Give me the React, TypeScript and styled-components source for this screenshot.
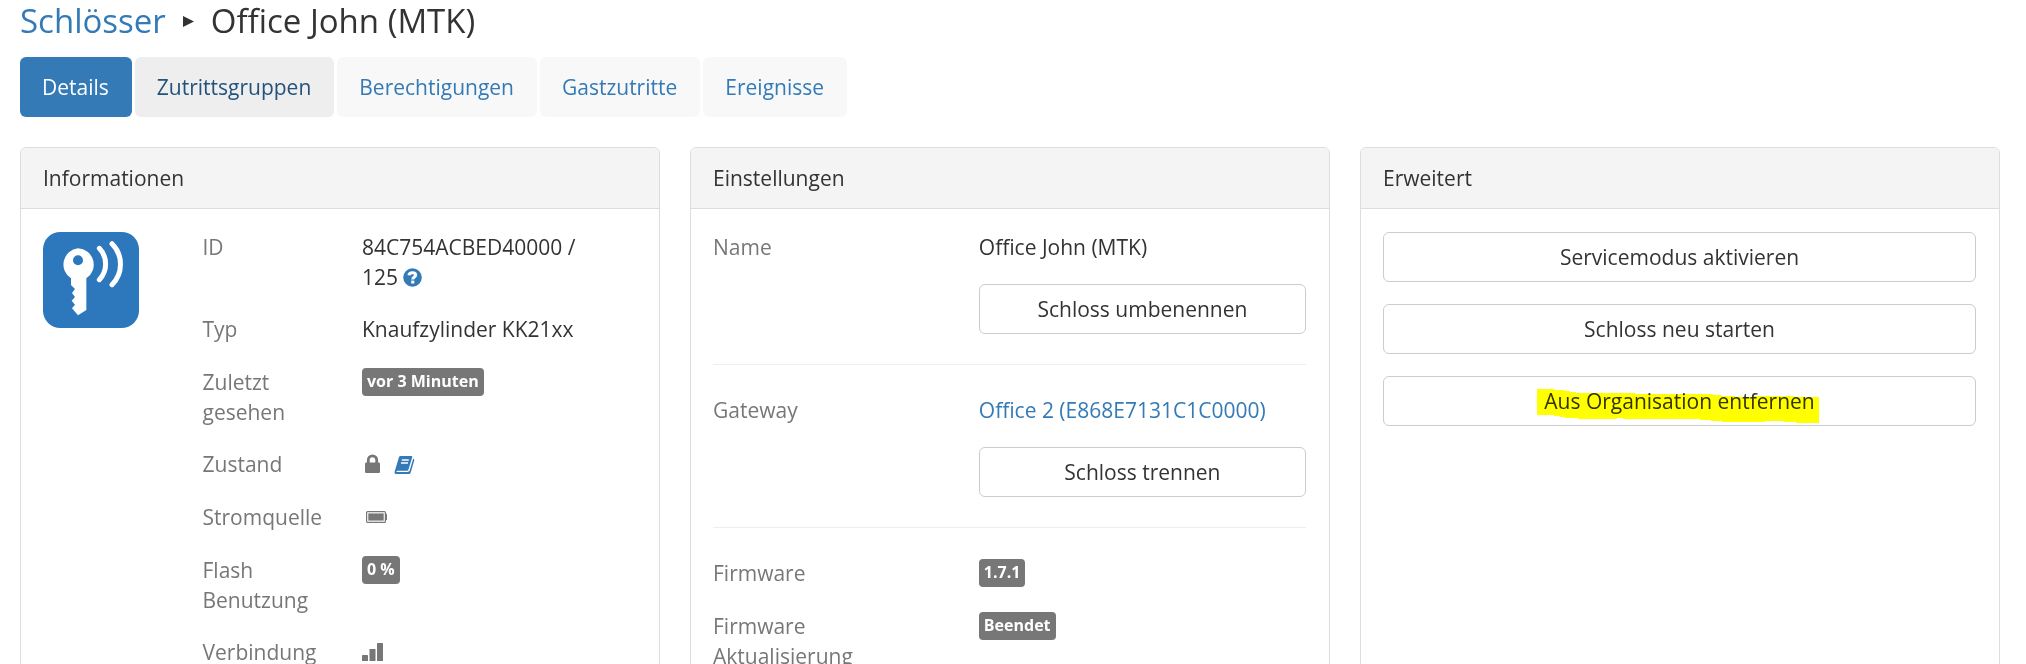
import React from 'react';
import styled, { createGlobalStyle, css } from 'styled-components';

const GlobalStyle = createGlobalStyle`
  *, *::before, *::after { box-sizing: border-box; }
  body {
    margin: 0;
    background: #fff;
    color: #333;
    font-family: 'Open Sans', 'Noto Sans', sans-serif;
    font-size: 21px;
    line-height: 30px;
  }
  a { color: #337ab7; text-decoration: none; }
`;

const Page = styled.main`
  height: 100vh;
  overflow: hidden;
  padding: 0 26px 0 20px;
`;

const Breadcrumb = styled.h1`
  display: flex;
  align-items: center;
  gap: 17px;
  margin: 0 0 15px;
  font-size: 33px;
  font-weight: 400;
  line-height: 42px;
`;

const Tabs = styled.nav`
  display: flex;
  gap: 3px;
  margin-bottom: 30px;
`;

const Tab = styled.a<{ $state?: 'active' | 'hover' }>`
  padding: 15px 23px 15px 22px;
  border-radius: 6px;
  background: #f8f8f8;
  ${({ $state }) => $state === 'active' && css`
    background: #337ab7;
    color: #fff;
  `}
  ${({ $state }) => $state === 'hover' && css`
    background: #eee;
    color: #23527c;
  `}
`;

const Columns = styled.div`
  display: grid;
  grid-template-columns: repeat(3, minmax(0, 1fr));
  gap: 30px;
`;

const Panel = styled.section`
  border: 1px solid #ddd;
  border-radius: 6px;
  overflow: hidden;
`;

const PanelTitle = styled.h2`
  margin: 0;
  padding: 15px 22px;
  border-bottom: 1px solid #ddd;
  background: #f4f4f4;
  font-size: 21px;
  font-weight: 400;
`;

const PanelBody = styled.div`
  padding: 23px 0 22px;
`;

const InfoLayout = styled.div`
  display: grid;
  grid-template-columns: 1fr 3fr;
`;

const IconCell = styled.div`
  padding: 0 22px;
  svg { display: block; }
`;

const Fields = styled.dl`
  display: flex;
  flex-direction: column;
  gap: 22px;
  margin: 0;
`;

const Field = styled.div<{ $columns: string }>`
  display: grid;
  grid-template-columns: ${({ $columns }) => $columns};
  min-height: 31px;
`;

const Label = styled.dt`
  padding: 0 22px;
  color: #777;
`;

const Value = styled.dd`
  min-width: 0;
  margin: 0;
  padding: 0 23px 0 22px;
`;

const IconLine = styled.span`
  display: flex;
  align-items: center;
  gap: 11px;
  height: 30px;
  color: #777;
  a { display: flex; }
`;

const NoWrap = styled.span`
  white-space: nowrap;
`;

const HelpLink = styled.a`
  svg { vertical-align: -2px; }
`;

const Badge = styled.span`
  display: block;
  width: fit-content;
  margin-top: 1px;
  padding: 3px 5px 5px;
  border-radius: 4px;
  background: #777;
  color: #fff;
  font-size: 16px;
  font-weight: 700;
  line-height: 20px;
`;

const Button = styled.button`
  display: block;
  width: 100%;
  padding: 9px 18px;
  border: 1px solid #ccc;
  border-radius: 6px;
  background: #fff;
  color: #333;
  font: inherit;
  text-align: center;
`;

const ValueButton = styled(Button)`
  margin-top: 22px;
`;

const Divider = styled.hr`
  margin: 30px 23px 30px 22px;
  border: 0;
  border-top: 1px solid #eee;
`;

const Actions = styled.div`
  display: flex;
  flex-direction: column;
  gap: 22px;
  padding: 0 23px 0 22px;
`;

const Marked = styled.span`
  position: relative;
`;

const Marker = styled.svg`
  position: absolute;
  left: -7px;
  top: 2px;
  mix-blend-mode: multiply;
`;

const KeyIcon = () => (
  <svg width="96" height="96" viewBox="69 66 288 288" aria-hidden="true">
    <rect x="69" y="66" width="288" height="288" rx="52" fill="#2d78bd" />
    <path
      fill="#fff"
      fillRule="evenodd"
      d="M174 115a49 49 0 0 1 25 90v95l-25 16-18-21 9-11-10-12 10-11-9-12 9-12-12-12v-20a49 49 0 0 1 21-90zM174 136a15 15 0 1 0 0 30a15 15 0 1 0 0-30z"
    />
    <g fill="none" stroke="#fff" strokeWidth="15" strokeLinecap="round">
      <path d="M238 115a68 68 0 0 1 0 94" />
      <path d="M276 101a87 87 0 0 1 0 123" />
    </g>
  </svg>
);

const HelpIcon = () => (
  <svg width="19" height="19" viewBox="0 0 19 19" aria-hidden="true">
    <circle cx="9.5" cy="9.5" r="9.3" fill="#337ab7" />
    <path d="M6 7.400C6.100 5.400 7.400 4.700 9.500 4.700c2 0 3.200.8 3.200 2.300 0 2-3 2.100-3 4.500" fill="none" stroke="#fff" strokeWidth="3" />
    <rect x="8.200" y="12.600" width="3.100" height="2.900" fill="#fff" />
  </svg>
);

const LockIcon = () => (
  <svg width="21" height="21" viewBox="0 0 21 21" aria-hidden="true">
    <path d="M6.300 9.500V6a4.200 4.200 0 0 1 8.400 0V9.500" fill="none" stroke="currentColor" strokeWidth="2.800" />
    <rect x="3" y="8.500" width="15" height="10.500" rx="1.200" fill="currentColor" />
  </svg>
);

const BookIcon = () => (
  <svg width="21" height="21" viewBox="0 0 21 21" aria-hidden="true">
    <path fill="currentColor" d="M6.600 2H17c1 0 1.400.5 1.100 1.400L14.500 15.500c-.3.900-.8 1.200-1.700 1.200H3.400c-1 0-1.200 1.200-.4 1.200h10.800c.9 0 1.500-.4 1.800-1.200L19.200 4.700c1 .2 1.300.9 1 1.800L16.700 18.500c-.4 1.200-1 1.600-2.100 1.600H2.400C.9 20.100.2 19 .7 17.500L4.800 3.700C5.100 2.500 5.600 2 6.600 2z" />
    <path d="M7.800 6h7M7 9h7" stroke="#fff" strokeWidth="1.300" />
  </svg>
);

const BatteryIcon = () => (
  <svg width="21" height="21" viewBox="0 0 21 21" aria-hidden="true">
    <rect x="0.600" y="4.600" width="18.800" height="10.800" rx="1" fill="none" stroke="currentColor" strokeWidth="1.200" />
    <rect x="2.300" y="6.400" width="15.400" height="7.200" fill="currentColor" />
    <path d="M19.500 6.500c1 0 1.500.5 1.500 1.200v4.600c0 .7-.5 1.200-1.500 1.200z" fill="currentColor" />
  </svg>
);

const SignalIcon = () => (
  <svg width="21" height="21" viewBox="0 0 21 21" fill="currentColor" aria-hidden="true">
    <rect x="0" y="13" width="6" height="6" rx="0.500" />
    <rect x="7.500" y="7" width="6" height="12" rx="0.500" />
    <rect x="15" y="1" width="6" height="18" rx="0.500" />
  </svg>
);

const infoColumns = '1fr 2fr';
const settingColumns = '5fr 7fr';

function Row({ label, columns, children }: { label: string; columns: string; children: React.ReactNode }) {
  return (
    <Field $columns={columns}>
      <Label>{label}</Label>
      <Value>{children}</Value>
    </Field>
  );
}

export default function App() {
  return (
    <>
      <GlobalStyle />
      <Page>
        <Breadcrumb>
          <a href="#locks">Schlösser</a>
          <svg width="11" height="11" viewBox="0 0 11 11" aria-hidden="true">
            <path d="M0 0L11 5.500L0 11z" fill="#333" />
          </svg>
          <span>Office John (MTK)</span>
        </Breadcrumb>

        <Tabs>
          <Tab href="#details" $state="active" aria-current="page">Details</Tab>
          <Tab href="#groups" $state="hover">Zutrittsgruppen</Tab>
          <Tab href="#permissions">Berechtigungen</Tab>
          <Tab href="#guests">Gastzutritte</Tab>
          <Tab href="#events">Ereignisse</Tab>
        </Tabs>

        <Columns>
          <Panel>
            <PanelTitle>Informationen</PanelTitle>
            <PanelBody>
              <InfoLayout>
                <IconCell><KeyIcon /></IconCell>
                <Fields>
                  <Row label="ID" columns={infoColumns}>
                    84C754ACBED40000 /{' '}
                    <NoWrap>
                      125 <HelpLink href="#help" aria-label="Hilfe"><HelpIcon /></HelpLink>
                    </NoWrap>
                  </Row>
                  <Row label="Typ" columns={infoColumns}>Knaufzylinder KK21xx</Row>
                  <Row label="Zuletzt gesehen" columns={infoColumns}><Badge>vor 3 Minuten</Badge></Row>
                  <Row label="Zustand" columns={infoColumns}>
                    <IconLine>
                      <LockIcon />
                      <a href="#log" aria-label="Protokoll"><BookIcon /></a>
                    </IconLine>
                  </Row>
                  <Row label="Stromquelle" columns={infoColumns}><IconLine><BatteryIcon /></IconLine></Row>
                  <Row label="Flash Benutzung" columns={infoColumns}><Badge>0 %</Badge></Row>
                  <Row label="Verbindung" columns={infoColumns}><IconLine><SignalIcon /></IconLine></Row>
                </Fields>
              </InfoLayout>
            </PanelBody>
          </Panel>

          <Panel>
            <PanelTitle>Einstellungen</PanelTitle>
            <PanelBody>
              <Fields>
                <Row label="Name" columns={settingColumns}>
                  Office John (MTK)
                  <ValueButton type="button">Schloss umbenennen</ValueButton>
                </Row>
              </Fields>
              <Divider />
              <Fields>
                <Row label="Gateway" columns={settingColumns}>
                  <a href="#gateway">Office 2 (E868E7131C1C0000)</a>
                  <ValueButton type="button">Schloss trennen</ValueButton>
                </Row>
              </Fields>
              <Divider />
              <Fields>
                <Row label="Firmware" columns={settingColumns}><Badge>1.7.1</Badge></Row>
                <Row label="Firmware Aktualisierung" columns={settingColumns}><Badge>Beendet</Badge></Row>
              </Fields>
            </PanelBody>
          </Panel>

          <Panel>
            <PanelTitle>Erweitert</PanelTitle>
            <PanelBody>
              <Actions>
                <Button type="button">Servicemodus aktivieren</Button>
                <Button type="button">Schloss neu starten</Button>
                <Button type="button">
                  <Marked>
                    Aus Organisation entfernen
                    <Marker width="282" height="34" viewBox="51 57 846 102" aria-hidden="true">
                      <path
                        fill="#ff0"
                        d="M51 57H103V60H135V63H150V66H168V69H345V72H578V75H605V78H645V81H696V78H825V81H897V159H828V156H792V153H735V156H605V153H573V150H540V147H309V144H291V147H174V144H135V141H120V138H102V135H51z"
                      />
                    </Marker>
                  </Marked>
                </Button>
              </Actions>
            </PanelBody>
          </Panel>
        </Columns>
      </Page>
    </>
  );
}
